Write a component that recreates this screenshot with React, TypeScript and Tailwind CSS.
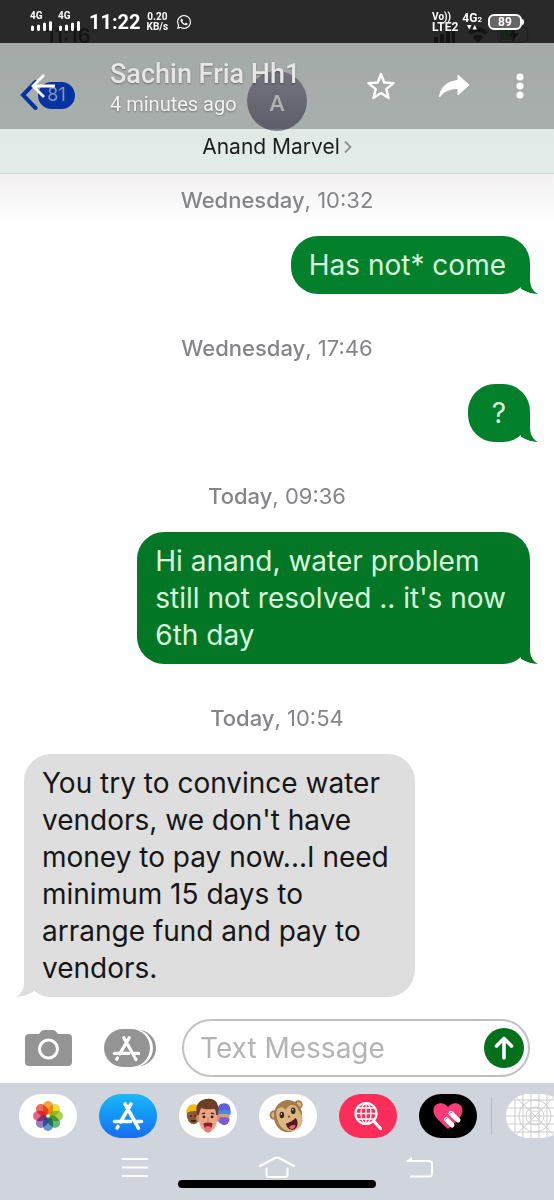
import { FaWhatsapp } from 'react-icons/fa'

type Message = {
  day: string
  time: string
  text: string
  mine: boolean
  tint?: string
}

const messages: Message[] = [
  { day: 'Wednesday', time: '10:32', text: 'Has not* come', mine: true, tint: 'bg-[#03802b] text-[#d9f7dc]' },
  { day: 'Wednesday', time: '17:46', text: '?', mine: true, tint: 'bg-[#03802b] text-[#d9f7dc]' },
  {
    day: 'Today',
    time: '09:36',
    text: "Hi anand, water problem\nstill not resolved .. it's now\n6th day",
    mine: true,
    tint: 'bg-[#047726] text-[#d9f7dc]'
  },
  {
    day: 'Today',
    time: '10:54',
    text: "You try to convince water\nvendors, we don't have\nmoney to pay now...I need\nminimum 15 days to\narrange fund and pay to\nvendors.",
    mine: false
  }
]

/* ================= ICONS ================= */

function Signal() {
  return (
    <div className="flex w-6 flex-col text-[10px] font-bold leading-[10px]">
      <span>4G</span>
      <svg viewBox="0 0 24 12" className="h-3 w-6" fill="none" stroke="white" strokeWidth="3" strokeLinecap="round">
        <path d="M2.500 6v2.500M8.500 5v3.500M14.500 3v5.500M20.500 1.500v7" />
      </svg>
    </div>
  )
}

function AppStoreMark({ className }: { className: string }) {
  return (
    <svg viewBox="0 0 32 30" className={className} fill="none" stroke="white" strokeWidth="3.600" strokeLinecap="round">
      <path d="M13 3l11.500 20.500M19 3L8.500 21M2.500 20.500h16M24.500 20.500h5M6 25.500l-.8 1.500M25.800 26l.7 1.200" />
    </svg>
  )
}

function PhotosMark() {
  const petals = [
    ['#f7941d', 0],
    ['#e5d90f', 45],
    ['#9bc840', 90],
    ['#3fae5a', 135],
    ['#3f86cf', 180],
    ['#7d68b5', 225],
    ['#e0487c', 270],
    ['#ee4d3a', 315]
  ] as const
  return (
    <svg viewBox="0 0 32 32" className="size-8">
      {petals.map(([color, angle]) => (
        <rect
          key={angle}
          x="11"
          y="1"
          width="10"
          height="13.500"
          rx="5"
          fill={color}
          fillOpacity="0.85"
          transform={`rotate(${angle} 16 16)`}
          className="mix-blend-multiply"
        />
      ))}
    </svg>
  )
}

function MemojiMark() {
  return (
    <svg viewBox="0 0 56 42" className="h-[38px] w-[54px]">
      <ellipse cx="12" cy="20" rx="7.500" ry="10" fill="#8a5a3a" />
      <path d="M4 18c0-7 4-10 8-10s8 2 8 9c-5-2-11-2-16 1z" fill="#f5b916" />
      <path d="M8 21h2M13 21h2M9 26c2 1 4 1 6 0" stroke="#3a2014" strokeWidth="1.500" />
      <ellipse cx="45" cy="20" rx="7" ry="10" fill="#e09a76" />
      <path d="M38 18c0-8 3-11 8-11s7 3 7 10c-5-2-10-2-15 1z" fill="#5b5fd8" />
      <path d="M38 16c5-2 10-2 15 0v4c-5-2-10-2-15 0z" fill="#3e8be8" />
      <path d="M38 24c4-2 10-2 14 0 0 4-3 7-6 7s-7-3-8-7z" fill="#7c5ad6" />
      <ellipse cx="17.500" cy="23" rx="2.500" ry="4" fill="#d58a68" />
      <ellipse cx="38.500" cy="23" rx="2.500" ry="4" fill="#d58a68" />
      <path d="M18 17c0-8 4-11 10-11s10 3 10 11v8c0 8-5 14-10 14s-10-6-10-14z" fill="#eaa585" />
      <path d="M16 20C13 9 18 2 29 2c8 0 12 6 10 18h-2c0-4-1-6-2-7-6 1-12 1-14-1-2 2-2 4-3 8z" fill="#6e3d26" />
      <path d="M21 18.500l4-.7M31 17.800l4 .7" stroke="#5b3020" strokeWidth="1.500" />
      <circle cx="23.500" cy="22" r="1.600" fill="#33201a" />
      <circle cx="32.500" cy="22" r="1.600" fill="#33201a" />
      <path d="M28 23v4" stroke="#c97c5e" strokeWidth="1.500" />
      <path d="M23 29c3-1 7-1 10 0 0 4-2 7-5 7s-5-3-5-7z" fill="#8c1f24" />
      <path d="M25 33c2-1 4-1 6 0v4c0 3-6 3-6 0z" fill="#ee7180" />
    </svg>
  )
}

function MonkeyMark() {
  return (
    <svg viewBox="0 0 40 38" className="h-9 w-[38px]">
      <circle cx="5.500" cy="18" r="5" fill="#a87b4b" />
      <circle cx="5.500" cy="18" r="3" fill="#e0b68d" />
      <circle cx="31" cy="7" r="4.500" fill="#a87b4b" />
      <circle cx="31.500" cy="7" r="2.500" fill="#e0b68d" />
      <ellipse cx="20" cy="19" rx="15" ry="17" fill="#a67b4a" />
      <path d="M8 19c-2-9 6-12 10-6 1-7 11-8 13 0 4 5 5 9 4 13-2 7-8 9-13 9-8 0-13-8-14-16z" fill="#dcb585" />
      <ellipse cx="13.500" cy="18" rx="2.400" ry="3.400" fill="#2e2c20" />
      <ellipse cx="25.500" cy="13.500" rx="2.400" ry="3.400" fill="#2e2c20" />
      <circle cx="13" cy="17" r=".8" fill="white" />
      <circle cx="25" cy="12.500" r=".8" fill="white" />
      <path d="M20 20l2-.7" stroke="#7b4f32" strokeWidth="2" />
      <path d="M18 27c3-1 7-3 10-6 4 4 2 12-3 12.500-4 .5-7-3-7-6.500z" fill="#54181c" />
      <path d="M21 31c2-2 5-3 7-2-1 4-5 5-7 2z" fill="#dc6b74" />
    </svg>
  )
}

function GlobeSearchMark() {
  return (
    <svg viewBox="0 0 30 30" className="size-[30px]" fill="none" stroke="white" strokeWidth="1.300">
      <circle cx="13" cy="12.500" r="10.500" strokeWidth="2.200" />
      <ellipse cx="13" cy="12.500" rx="5" ry="10" />
      <path d="M13 2v21M3 12.500h20M5 7h16M5 18h16" />
      <path d="M21 20.500l6.500 7" strokeWidth="3.200" strokeLinecap="round" />
    </svg>
  )
}

function HeartMark() {
  return (
    <svg viewBox="0 0 32 30" className="h-[30px] w-8">
      <path d="M16 28C7 20 1.500 15 1.500 9.500 1.500 1 12 0 16 6c4-6 14.500-5 14.500 3.500C30.500 15 25 20 16 28z" fill="#fb3a78" />
      <g stroke="white" strokeLinecap="round" strokeWidth="5">
        <path d="M19 12.500l7 6.500M14.500 18.500l5.500 5.500" />
      </g>
      <path d="M15 14l9.500 9" stroke="#fb3a78" strokeWidth="1" />
      <path d="M17.500 12.500l2.500-1.500M13 18.500l2.500-1.500" stroke="#c5336a" strokeWidth=".8" />
    </svg>
  )
}

function GridMark() {
  return (
    <svg viewBox="0 0 58 44" className="h-11 w-[58px]" fill="none" stroke="#c3c3c3" strokeWidth=".8">
      <path d="M9 0v44M17 0v44M25 0v44M33 0v44M41 0v44M49 0v44M0 6h58M0 14h58M0 22h58M0 30h58M0 38h58" />
      <path d="M7 0l44 44M51 0L7 44" />
      <circle cx="29" cy="22" r="5" />
      <circle cx="29" cy="22" r="9" />
      <circle cx="29" cy="22" r="16" />
    </svg>
  )
}

/* ================= ANDROID OVERLAY ================= */

function ViewerBar() {
  return (
    <div className="absolute inset-x-0 top-0 font-[Roboto,sans-serif] text-white">
      <div className="flex h-[43px] items-center justify-between bg-[#151515]/90 px-[30px]">
        <div className="flex items-center">
          <Signal />
          <span className="w-1" />
          <Signal />
          <span className="ml-[7px] text-xl font-bold leading-6">11:22</span>
          <div className="ml-1.5 flex flex-col text-center text-[10px] font-bold leading-[10px]">
            <span>0.20</span>
            <span>KB/s</span>
          </div>
          <FaWhatsapp className="ml-2 size-4" />
        </div>
        <div className="flex items-center gap-1">
          <div className="flex flex-col text-xs font-bold leading-[10px]">
            <span className="text-[10px] leading-[10px]">Vo))</span>
            <span>LTE2</span>
          </div>
          <div className="flex flex-col items-center text-xs font-bold leading-[11px]">
            <span>
              4G<span className="text-[8px]">2</span>
            </span>
            <svg viewBox="0 0 10 5" className="h-[5px] w-2.5" fill="white">
              <path d="M0 0h4.500L2.200 4.500zM5.500 4.500H10L7.800 0z" />
            </svg>
          </div>
          <div className="ml-0.5 flex items-center">
            <span className="flex h-4 w-[34px] items-center justify-center rounded-md border-2 border-white bg-[#666] text-xs font-bold leading-3">
              89
            </span>
            <span className="h-1.5 w-0.5 rounded-r bg-white" />
          </div>
        </div>
      </div>

      <div className="flex h-[86px] items-center bg-black/25 pl-[30px] pr-5">
        <button aria-label="Back" className="size-7">
          <svg viewBox="0 0 28 28" className="size-7" fill="none" stroke="white" strokeWidth="2.800">
            <path d="M25 14H3.500M14 3L3 14l11 11" />
          </svg>
        </button>
        <div className="ml-[52px] flex flex-1 flex-col pt-1 [text-shadow:0_1px_2px_rgb(0_0_0/0.35)]">
          <h1 className="whitespace-nowrap text-[27px] font-medium leading-8 text-[#e6e6e6]">Sachin Fria Hh1</h1>
          <p className="text-xl leading-7 text-[#f4f4f4]">4 minutes ago</p>
        </div>
        <button aria-label="Star">
          <svg viewBox="0 0 28 28" className="size-7" fill="none" stroke="white" strokeWidth="2.400" strokeLinejoin="round">
            <path d="M14 2l3.200 8.500 9.300.6-7.200 6 2.300 9-7.600-5-7.600 5 2.300-9-7.200-6 9.300-.6z" />
          </svg>
        </button>
        <button aria-label="Forward" className="ml-[43px]">
          <svg viewBox="0 0 32 26" className="h-[26px] w-8" fill="white" stroke="white" strokeWidth="1" strokeLinejoin="round">
            <path d="M20 2l11 10-11 10v-6.500C12 15.500 6 18 1.500 24 2.500 14 9 8.500 20 7.500z" />
          </svg>
        </button>
        <button aria-label="More options" className="ml-9">
          <svg viewBox="0 0 28 28" className="size-7" fill="white">
            <circle cx="14" cy="5" r="3.500" />
            <circle cx="14" cy="14" r="3.500" />
            <circle cx="14" cy="23" r="3.500" />
          </svg>
        </button>
      </div>
    </div>
  )
}

/* ================= CHAT ================= */

function ChatHeader() {
  return (
    <header className="border-b border-[#d3d8d6] bg-linear-to-b from-[#d9dfdc] to-[#e4ede9] pb-2.5">
      <div className="flex h-[54px] items-start justify-between pl-[46px] pr-[22px] pt-5">
        <span className="text-xl font-semibold leading-8">11:16</span>
        <svg viewBox="0 0 100 18" className="mt-1.5 h-[18px] w-[100px]">
          <path d="M2 11h4v6H2zM8 8h4v9H8zM14 5h4v12h-4zM20 1h3v16h-3z" />
          <path d="M36 6c6-6 14-6 20 0l-3 3c-4-4-10-4-14 0zM40.500 11c3-3 8-3 11 0L46 17z" />
          <rect x="66" y="1" width="30" height="15" rx="4" fill="none" stroke="#555" />
          <path d="M68 3h14v11H68z" fill="#1fae4e" />
          <path d="M83 1l-6 9h4l-1 6 7-9h-4z" />
        </svg>
      </div>
      <div className="grid grid-cols-3 items-start pt-[17px]">
        <a href="#inbox" className="flex h-12 items-center pl-5">
          <svg viewBox="0 0 18 32" className="h-8 w-[18px]" fill="none" stroke="#0a44d8" strokeWidth="4" strokeLinecap="round">
            <path d="M15.500 3L3 16l12.500 13" />
          </svg>
          <span className="flex h-[27px] w-[37px] items-center justify-center rounded-full bg-[#0a44d8] text-lg text-[#b9c9e8]">
            81
          </span>
        </a>
        <div className="flex size-[60px] items-center justify-center justify-self-center rounded-full bg-linear-to-b from-[#9a9aa8] to-[#7e7e8e] pt-1 text-[22px] font-medium leading-6 text-[#eee]">
          A
        </div>
      </div>
      <div className="flex items-center justify-center gap-1 text-[21px] leading-8 text-[#1c1f1e]">
        <h2>Anand Marvel</h2>
        <svg viewBox="0 0 8 14" className="h-3.5 w-2" fill="none" stroke="#8e9391" strokeWidth="1.800">
          <path d="M1 1.500L6.500 7 1 12.500" />
        </svg>
      </div>
    </header>
  )
}

function Bubble({ text, mine, tint }: Message) {
  const side = mine ? `self-end ${tint}` : 'self-start bg-[#dedede] text-[#161616]'
  const padding = text.length === 1 ? 'px-6' : mine ? 'pl-[18px] pr-6' : 'pl-[18px] pr-[26px]'
  return (
    <div className={`relative whitespace-pre-line rounded-[27px] pb-2.5 pt-[11px] text-[28px] leading-[37px] ${side} ${padding}`}>
      {text}
      {/* white wedge cuts the notch between bubble and tail */}
      <svg
        viewBox="0 0 28 28"
        className={`absolute bottom-0 size-7 ${mine ? '-right-2' : '-left-2 -scale-x-100'}`}
      >
        <path
          d="M8 0h12v12c0 8 2 12.500 8 16-6 0-12-2-17-5z"
          className={!mine ? 'fill-[#dedede]' : tint?.includes('#047726') ? 'fill-[#047726]' : 'fill-[#03802b]'}
        />
        <path d="M0 28.500c5-1 8-3 11-5.500 5 3 11 5 17 5v.5z" fill="white" />
      </svg>
    </div>
  )
}

function Composer() {
  return (
    <form className="flex items-center bg-white pb-1.5 pl-[25px] pr-6 pt-[22px]" onSubmit={e => e.preventDefault()}>
      <button type="button" aria-label="Camera">
        <svg viewBox="0 0 47 36" className="h-9 w-[47px]" fill="#949494">
          <path d="M4 4h10l2-2.500Q17 0 19 0h9q2 0 3 1.500L33 4h10q4 0 4 4v24q0 4-4 4H4q-4 0-4-4V8q0-4 4-4z" />
          <circle cx="23.500" cy="19" r="9" fill="none" stroke="white" strokeWidth="3" />
        </svg>
      </button>
      <button type="button" aria-label="Apps" className="relative ml-8 flex h-[38px] w-[52px] items-center">
        <svg viewBox="0 0 52 38" className="absolute inset-0 h-[38px] w-[52px]">
          <rect x="8" y="1" width="44" height="36" rx="18" fill="#949494" />
          <rect x="0" y="0" width="49" height="38" rx="19" fill="white" />
          <rect x="0" y="0" width="46" height="38" rx="19" fill="#949494" />
        </svg>
        <AppStoreMark className="relative ml-2 h-[27px] w-[29px]" />
      </button>
      <div className="ml-[26px] flex h-[58px] min-w-0 flex-1 items-center rounded-full border-2 border-[#c2c2c2] bg-white pl-4 pr-1">
        <input
          aria-label="Text Message"
          placeholder="Text Message"
          className="min-w-0 flex-1 text-[28px] leading-9 outline-none placeholder:text-[#b4b4b4]"
        />
        <button aria-label="Send" className="flex size-10 shrink-0 items-center justify-center rounded-full bg-[#04701c]">
          <svg viewBox="0 0 22 26" className="h-[26px] w-[22px]" fill="none" stroke="white" strokeWidth="3.600" strokeLinecap="round" strokeLinejoin="round">
            <path d="M11 23V4M3.500 11L11 3.500 18.500 11" />
          </svg>
        </button>
      </div>
    </form>
  )
}

function AppStrip() {
  const pill = 'flex h-11 w-[58px] shrink-0 items-center justify-center overflow-hidden rounded-full'
  return (
    <div className="flex items-center gap-[22px] overflow-hidden pl-[19px] pt-[11px]">
      <button aria-label="Photos" className={`${pill} bg-white`}>
        <PhotosMark />
      </button>
      <button aria-label="App Store" className={`${pill} bg-linear-to-b from-[#1cb8fa] to-[#1a6df0]`}>
        <AppStoreMark className="h-[30px] w-8" />
      </button>
      <button aria-label="Memoji" className={`${pill} bg-white`}>
        <MemojiMark />
      </button>
      <button aria-label="Animoji" className={`${pill} bg-white`}>
        <MonkeyMark />
      </button>
      <button aria-label="Image search" className={`${pill} bg-[#fc2d58]`}>
        <GlobeSearchMark />
      </button>
      <button aria-label="Digital Touch" className={`${pill} bg-black`}>
        <HeartMark />
      </button>
      <div className="flex shrink-0 items-center gap-3.5">
        <span className="-ml-2 h-[38px] w-px bg-[#b3b8c1]" />
        <button aria-label="More apps" className={`${pill} bg-white`}>
          <GridMark />
        </button>
      </div>
    </div>
  )
}

function SystemNav() {
  return (
    <nav className="mt-[18px] grid grid-cols-3 justify-items-center px-16">
      <button aria-label="Recent apps">
        <svg viewBox="0 0 36 22" className="h-[22px] w-9" fill="none" stroke="white" strokeWidth="2">
          <path d="M5 3h26M5 11.500h26M5 20h26" />
        </svg>
      </button>
      <button aria-label="Home">
        <svg viewBox="0 0 36 22" className="h-[22px] w-9" fill="none" stroke="white" strokeWidth="2" strokeLinecap="round">
          <path d="M1 10L16 2q2-1 4 0l15 8M7.500 12.500v6q0 2.500 2.500 2.500h16q2.500 0 2.500-2.500v-6" />
        </svg>
      </button>
      <button aria-label="Go back">
        <svg viewBox="0 0 36 22" className="h-[22px] w-9" fill="none" stroke="white" strokeWidth="2">
          <path d="M9 20.500h19q3 0 3-3V8q0-3-3-3H6" />
          <path d="M4.500 5.500L11 1v4.500z" fill="white" stroke="none" />
        </svg>
      </button>
    </nav>
  )
}

export default function App() {
  return (
    <div className="relative flex min-h-screen flex-col overflow-hidden bg-white font-[Inter,sans-serif]">
      <ChatHeader />

      <main className="flex flex-col bg-[linear-gradient(#f3f1f2,#ffffff_50px)] px-6 pt-2.5">
        {messages.map((message, i) => (
          <section key={message.text} className={`flex flex-col ${i > 0 ? 'mt-[38px]' : ''}`}>
            <p className="mb-5 text-center text-[22px] leading-8 text-[#858589]">
              <span className="font-medium">{message.day}</span>, {message.time}
            </p>
            <Bubble {...message} />
          </section>
        ))}
      </main>

      <Composer />

      <footer className="flex-1 bg-[#d0d4dc] pb-3">
        <AppStrip />
        <SystemNav />
        <div className="mx-auto mt-0.5 h-2 w-[198px] rounded-full bg-black" />
      </footer>

      <ViewerBar />
    </div>
  )
}
